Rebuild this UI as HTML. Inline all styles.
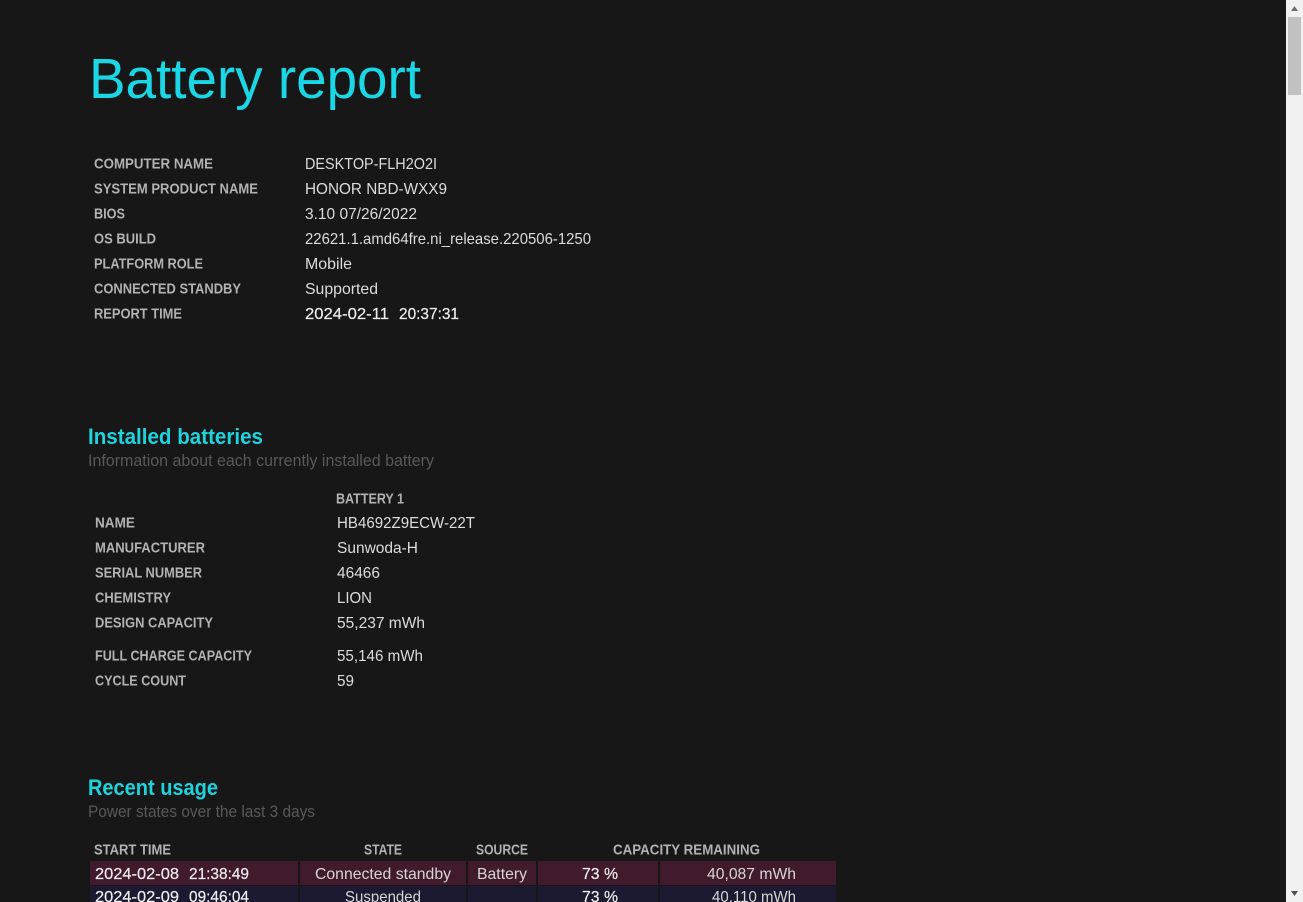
<!DOCTYPE html>
<html lang="en"><head><meta charset="utf-8"><title>Battery report</title>
<style>
html,body{margin:0;padding:0;width:1303px;height:902px;overflow:hidden;background:#171717}
svg{display:block;position:absolute;left:0;top:0}
text{font-family:"Liberation Sans",sans-serif;white-space:pre}
.l{font-size:15px;font-weight:700;fill:#b2b2b2}
.v{font-size:16px;fill:#dcdcdc}
.b{font-size:16px;fill:#eeeeee;stroke:#eeeeee;stroke-width:.2px}
.h{font-size:22px;font-weight:700;fill:#1fd3dc}
.s{font-size:17px;fill:#595959}
.c{font-size:16px;fill:#d6d6d6}
</style></head>
<body>
<svg width="1303" height="902" viewBox="0 0 1303 902" xmlns="http://www.w3.org/2000/svg">
<rect width="1303" height="902" fill="#171717"/>
<text x="89" y="98" font-size="57" fill="#1bd6e4" textLength="332" lengthAdjust="spacingAndGlyphs">Battery report</text>

<text class="l" x="94" y="168.5" textLength="119" lengthAdjust="spacingAndGlyphs">COMPUTER NAME</text>
<text class="v" x="305" y="169" textLength="132" lengthAdjust="spacingAndGlyphs">DESKTOP-FLH2O2I</text>
<text class="l" x="94" y="193.5" textLength="164" lengthAdjust="spacingAndGlyphs">SYSTEM PRODUCT NAME</text>
<text class="v" x="305" y="194" textLength="142" lengthAdjust="spacingAndGlyphs">HONOR NBD-WXX9</text>
<text class="l" x="94" y="218.5" textLength="31" lengthAdjust="spacingAndGlyphs">BIOS</text>
<text class="v" x="305" y="219" textLength="112" lengthAdjust="spacingAndGlyphs">3.10 07/26/2022</text>
<text class="l" x="94" y="243.5" textLength="62" lengthAdjust="spacingAndGlyphs">OS BUILD</text>
<text class="v" x="305" y="244" textLength="286" lengthAdjust="spacingAndGlyphs">22621.1.amd64fre.ni_release.220506-1250</text>
<text class="l" x="94" y="268.5" textLength="109" lengthAdjust="spacingAndGlyphs">PLATFORM ROLE</text>
<text class="v" x="305" y="269" textLength="47" lengthAdjust="spacingAndGlyphs">Mobile</text>
<text class="l" x="94" y="293.5" textLength="147" lengthAdjust="spacingAndGlyphs">CONNECTED STANDBY</text>
<text class="v" x="305" y="294" textLength="73" lengthAdjust="spacingAndGlyphs">Supported</text>
<text class="l" x="94" y="318.5" textLength="88" lengthAdjust="spacingAndGlyphs">REPORT TIME</text>
<text class="b" x="305" y="319" textLength="84" lengthAdjust="spacingAndGlyphs">2024-02-11</text>
<text class="b" x="399" y="319" textLength="60" lengthAdjust="spacingAndGlyphs">20:37:31</text>

<text class="h" x="88" y="444" textLength="175" lengthAdjust="spacingAndGlyphs">Installed batteries</text>
<text class="s" x="88" y="466" textLength="346" lengthAdjust="spacingAndGlyphs">Information about each currently installed battery</text>

<text class="l" x="336" y="503.5" textLength="68" lengthAdjust="spacingAndGlyphs">BATTERY 1</text>
<text class="l" x="95" y="527.5" textLength="40" lengthAdjust="spacingAndGlyphs">NAME</text>
<text class="v" x="337" y="528" textLength="138" lengthAdjust="spacingAndGlyphs">HB4692Z9ECW-22T</text>
<text class="l" x="95" y="552.5" textLength="110" lengthAdjust="spacingAndGlyphs">MANUFACTURER</text>
<text class="v" x="337" y="553" textLength="81" lengthAdjust="spacingAndGlyphs">Sunwoda-H</text>
<text class="l" x="95" y="577.5" textLength="107" lengthAdjust="spacingAndGlyphs">SERIAL NUMBER</text>
<text class="v" x="337" y="578" textLength="43" lengthAdjust="spacingAndGlyphs">46466</text>
<text class="l" x="95" y="602.5" textLength="76" lengthAdjust="spacingAndGlyphs">CHEMISTRY</text>
<text class="v" x="337" y="603" textLength="35" lengthAdjust="spacingAndGlyphs">LION</text>
<text class="l" x="95" y="627.5" textLength="118" lengthAdjust="spacingAndGlyphs">DESIGN CAPACITY</text>
<text class="v" x="337" y="628" textLength="88" lengthAdjust="spacingAndGlyphs">55,237 mWh</text>
<text class="l" x="95" y="660.5" textLength="157" lengthAdjust="spacingAndGlyphs">FULL CHARGE CAPACITY</text>
<text class="v" x="337" y="661" textLength="86" lengthAdjust="spacingAndGlyphs">55,146 mWh</text>
<text class="l" x="95" y="685.5" textLength="91" lengthAdjust="spacingAndGlyphs">CYCLE COUNT</text>
<text class="v" x="337" y="686" textLength="17" lengthAdjust="spacingAndGlyphs">59</text>

<text class="h" x="88" y="795" textLength="130" lengthAdjust="spacingAndGlyphs">Recent usage</text>
<text class="s" x="88" y="817" textLength="227" lengthAdjust="spacingAndGlyphs">Power states over the last 3 days</text>

<text class="l" x="94" y="854.5" textLength="77" lengthAdjust="spacingAndGlyphs">START TIME</text>
<text class="l" x="364" y="854.5" textLength="38" lengthAdjust="spacingAndGlyphs">STATE</text>
<text class="l" x="476" y="854.5" textLength="52" lengthAdjust="spacingAndGlyphs">SOURCE</text>
<text class="l" x="613" y="854.5" textLength="147" lengthAdjust="spacingAndGlyphs">CAPACITY REMAINING</text>

<g fill="#411a2e">
<rect x="90" y="861" width="208" height="24"/>
<rect x="300" y="861" width="166" height="24"/>
<rect x="468" y="861" width="68" height="24"/>
<rect x="538" y="861" width="120" height="24"/>
<rect x="660" y="861" width="176" height="24"/>
</g>
<g fill="#1b1a31">
<rect x="90" y="886" width="208" height="16"/>
<rect x="300" y="886" width="166" height="16"/>
<rect x="468" y="886" width="68" height="16"/>
<rect x="538" y="886" width="120" height="16"/>
<rect x="660" y="886" width="176" height="16"/>
</g>
<text class="b" x="95" y="879" textLength="84" lengthAdjust="spacingAndGlyphs">2024-02-08</text>
<text class="b" x="189" y="879" textLength="60" lengthAdjust="spacingAndGlyphs">21:38:49</text>
<text class="c" x="315" y="879" textLength="136" lengthAdjust="spacingAndGlyphs">Connected standby</text>
<text class="c" x="477" y="879" textLength="50" lengthAdjust="spacingAndGlyphs">Battery</text>
<text class="b" x="582" y="879" textLength="36" lengthAdjust="spacingAndGlyphs">73 %</text>
<text class="c" x="707" y="879" textLength="89" lengthAdjust="spacingAndGlyphs">40,087 mWh</text>
<text class="b" x="95" y="902" textLength="84" lengthAdjust="spacingAndGlyphs">2024-02-09</text>
<text class="b" x="189" y="902" textLength="60" lengthAdjust="spacingAndGlyphs">09:46:04</text>
<text class="c" x="345" y="902" textLength="76" lengthAdjust="spacingAndGlyphs">Suspended</text>
<text class="b" x="582" y="902" textLength="36" lengthAdjust="spacingAndGlyphs">73 %</text>
<text class="c" x="712" y="902" textLength="84" lengthAdjust="spacingAndGlyphs">40,110 mWh</text>

<rect x="1286" y="0" width="17" height="902" fill="#f1f1f1"/>
<rect x="1288" y="17" width="13" height="78" fill="#c1c1c1"/>
<path d="M1291 11 L1298 11 L1294.5 6 Z" fill="#6e6e6e"/>
<path d="M1291 891 L1298 891 L1294.5 896 Z" fill="#505050"/>
</svg>
</body></html>
